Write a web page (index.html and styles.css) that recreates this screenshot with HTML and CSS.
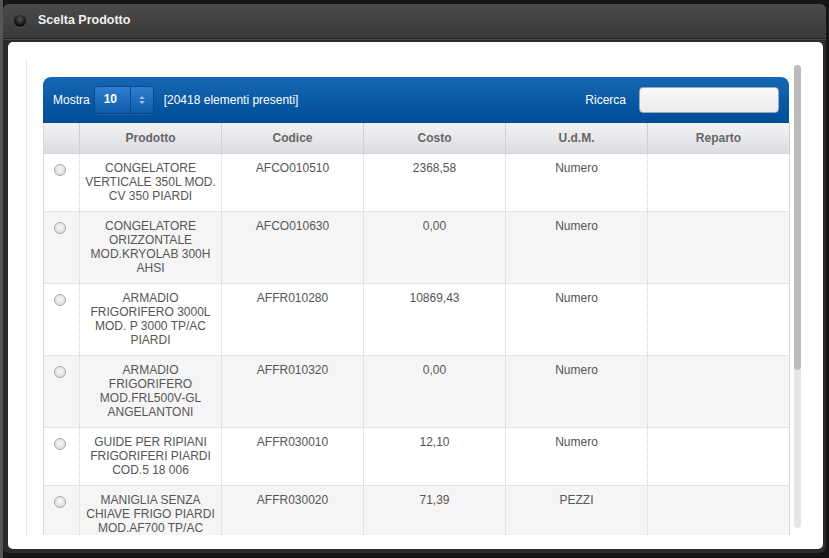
FILE: index.html
```html
<!DOCTYPE html>
<html>
<head>
<meta charset="utf-8">
<link rel="stylesheet" href="styles.css">
</head>
<body>
<div class="window">
  <div class="titlebar">
    <span class="dot"></span>
    <span class="title">Scelta Prodotto</span>
  </div>
  <div class="content">
    <div class="scroll-area">
      <div class="scroll-inner">
        <div class="widget">
          <div class="toolbar">
            <span class="lbl">Mostra</span>
            <div class="select">
              <span class="sel-val">10</span>
              <span class="sel-btn">
                <svg width="8" height="12" viewBox="0 0 8 12"><path d="M1 5 L4 2 L7 5 Z M1 7 L4 10 L7 7 Z" fill="#9fc0e6"/></svg>
              </span>
            </div>
            <span class="count">[20418 elementi presenti]</span>
            <span class="spacer"></span>
            <span class="lbl">Ricerca</span>
            <div class="search"></div>
          </div>
          <table class="grid">
            <colgroup>
              <col class="c-radio"><col class="c-col"><col class="c-col"><col class="c-col"><col class="c-col"><col class="c-col">
            </colgroup>
            <thead>
              <tr><th></th><th>Prodotto</th><th>Codice</th><th>Costo</th><th>U.d.M.</th><th>Reparto</th></tr>
            </thead>
            <tbody>
              <tr><td class="r"><span class="radio"></span></td><td>CONGELATORE VERTICALE 350L MOD. CV 350 PIARDI</td><td>AFCO010510</td><td>2368,58</td><td>Numero</td><td></td></tr>
              <tr><td class="r"><span class="radio"></span></td><td>CONGELATORE ORIZZONTALE MOD.KRYOLAB 300H AHSI</td><td>AFCO010630</td><td>0,00</td><td>Numero</td><td></td></tr>
              <tr><td class="r"><span class="radio"></span></td><td>ARMADIO FRIGORIFERO 3000L MOD. P 3000 TP/AC PIARDI</td><td>AFFR010280</td><td>10869,43</td><td>Numero</td><td></td></tr>
              <tr><td class="r"><span class="radio"></span></td><td>ARMADIO FRIGORIFERO MOD.FRL500V-GL ANGELANTONI</td><td>AFFR010320</td><td>0,00</td><td>Numero</td><td></td></tr>
              <tr><td class="r"><span class="radio"></span></td><td>GUIDE PER RIPIANI FRIGORIFERI PIARDI COD.5 18 006</td><td>AFFR030010</td><td>12,10</td><td>Numero</td><td></td></tr>
              <tr><td class="r"><span class="radio"></span></td><td>MANIGLIA SENZA CHIAVE FRIGO PIARDI MOD.AF700 TP/AC</td><td>AFFR030020</td><td>71,39</td><td>PEZZI</td><td></td></tr>
            </tbody>
          </table>
        </div>
      </div>
      <div class="scrollbar"><div class="thumb"></div></div>
    </div>
  </div>
</div>
</body>
</html>
```
FILE: styles.css
```css
html, body {
  margin: 0;
  padding: 0;
}
body {
  width: 829px;
  height: 558px;
  background: #151515;
  overflow: hidden;
  font-family: "Liberation Sans", Arial, sans-serif;
  border-left: 3px solid #555;
  box-sizing: border-box;
}
.window {
  margin-top: 4px;
  width: 823px;
  height: 549px;
  background: #2b2b2b;
  border-radius: 6px;
  box-sizing: border-box;
  padding: 0 3px 4px 5px;
  display: flex;
  flex-direction: column;
}
.titlebar {
  height: 34px;
  flex: none;
  background: linear-gradient(#4a4a4a, #3a3a3a);
  border-radius: 6px 6px 0 0;
  margin: 0 -3px 0 -5px;
  padding-left: 11px;
  display: flex;
  align-items: center;
  border-bottom: 1px solid #222;
  box-shadow: 0 1px 0 #4a4a4a;
}
.dot {
  width: 12px;
  height: 12px;
  border-radius: 50%;
  background: radial-gradient(circle at 50% 35%, #555 0%, #111 60%, #000 100%);
  box-shadow: 0 1px 0 #555;
}
.title {
  margin-left: 12px;
  color: #f0f0f0;
  font-size: 12.5px;
  font-weight: bold;
  margin-top: -2px;
}
.content {
  flex: 1;
  margin-top: 3px;
  background: #fff;
  border-radius: 5px;
  padding: 17px 0 0 18px;
  overflow: hidden;
}
.scroll-area {
  height: 476px;
  width: 778px;
  border-left: 1px solid #e6e6e6;
  display: flex;
  overflow: hidden;
}
.scroll-inner {
  padding: 18px 0 0 16px;
  width: 746px;
  flex: none;
}
.scrollbar {
  margin: 6px 0 7px 5px;
  width: 7px;
  border-radius: 4px;
  background: #e6e6e6;
  flex: none;
}
.thumb {
  height: 305px;
  border-radius: 4px;
  background: #bcbcbc;
}
.widget {
  width: 746px;
}
.toolbar {
  height: 46px;
  box-sizing: border-box;
  border-radius: 8px 8px 0 0;
  background: linear-gradient(#1667b4, #004d98);
  display: flex;
  align-items: center;
  padding: 0 10px 0 10px;
  color: #fff;
  font-size: 12px;
}
.select {
  margin-left: 4px;
  width: 60px;
  height: 28px;
  box-sizing: border-box;
  border: 1px solid #0a4a8c;
  border-radius: 4px;
  background: linear-gradient(#2f7fd0, #0e5aa8);
  display: flex;
  box-shadow: 0 1px 0 rgba(255,255,255,0.1);
}
.sel-val {
  flex: 1;
  font-weight: bold;
  display: flex;
  align-items: center;
  padding-left: 9px;
  padding-bottom: 2px;
}
.sel-btn {
  width: 22px;
  border-left: 1px solid #0a4a8c;
  display: flex;
  align-items: center;
  justify-content: center;
}
.count {
  margin-left: 10px;
}
.spacer {
  flex: 1;
}
.search {
  margin-left: 13px;
  width: 140px;
  height: 26px;
  box-sizing: border-box;
  border-radius: 4px;
  border: 1px solid #9ab;
  background: linear-gradient(#f9f9f9, #ececec);
  margin-top: -1px;
}
.grid {
  width: 746px;
  border-collapse: collapse;
  table-layout: fixed;
  font-size: 12px;
  color: #555;
}
.c-radio { width: 36px; }
.c-col { width: 142px; }
.grid th {
  height: 30px;
  padding: 0;
  background: linear-gradient(#f2f2f4, #dcdde1);
  color: #666;
  font-weight: bold;
  font-size: 12px;
  border-left: 1px solid #fbfbfb;
  border-right: 1px solid #cfd0d4;
  border-bottom: 1px solid #d4d4d6;
}
.grid th:first-child { border-left: 1px solid #d8d8d8; }
.grid td {
  padding: 7px 5px 8px;
  text-align: center;
  vertical-align: top;
  line-height: 14px;
  border-left: 1px dotted #cfcfcf;
  border-right: 1px dotted #cfcfcf;
  border-bottom: 1px solid #e4e4e4;
}
.grid td:first-child { border-left: 1px solid #d8d8d8; }
.grid td:last-child { border-right: 1px solid #d8d8d8; }
.grid tbody tr:nth-child(even) td { background: #f5f5f5; }
.grid td.r {
  padding: 10px 4px 0 0;
}
.radio {
  display: inline-block;
  width: 10px;
  height: 10px;
  border-radius: 50%;
  border: 1px solid #a9a9a9;
  background: radial-gradient(circle at 50% 40%, #f6f6f6, #d6d6d6);
}
```
